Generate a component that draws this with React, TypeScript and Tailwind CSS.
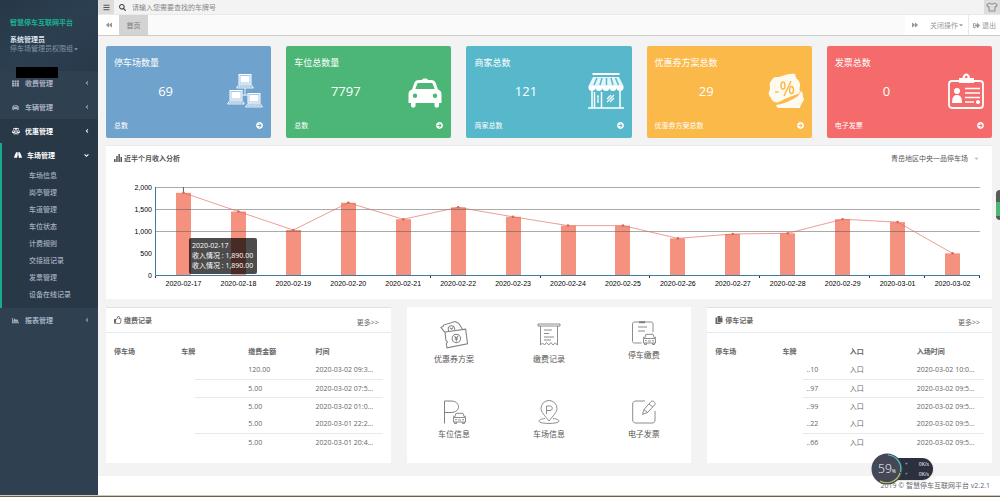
import React from 'react';
import {
  FaAngleDown,
  FaAngleLeft,
  FaArrowCircleRight,
  FaBackward,
  FaBalanceScale,
  FaBars,
  FaCar,
  FaCaretDown,
  FaChartArea,
  FaCopy,
  FaForward,
  FaRoad,
  FaSearch,
  FaSignOutAlt,
  FaRegThumbsUp,
  FaTh,
} from 'react-icons/fa';

const subItems = ['车场信息', '岗亭管理', '车道管理', '车位状态', '计费规则', '交接班记录', '发票管理', '设备在线记录'];

function MenuLink({ icon, label, bright, open }: { icon: React.ReactNode; label: string; bright?: boolean; open?: boolean }) {
  return (
    <a href="#" className={`flex h-6 items-center pr-2 pl-3 font-bold ${bright ? 'text-white' : 'text-[#a7b1c2]'}`}>
      <span className="flex w-[13px] shrink-0 items-center">{icon}</span>
      <span className="flex-1">{label}</span>
      {open ? <FaAngleDown className="size-[7px]" /> : <FaAngleLeft className="size-[6px]" />}
    </a>
  );
}

function Sidebar() {
  return (
    <aside className="relative w-[98px] shrink-0 bg-[#2f4050] text-[7px] leading-[9px]">
      <div className="h-[71px] bg-linear-to-br from-[#263848] via-[#2c3f50] to-[#28394a] pt-[18px] pl-[10px]">
        <h1 className="text-[7px] font-bold text-[#1ab394]">智慧停车互联网平台</h1>
        <p className="mt-2 font-bold text-[#dfe4ed]">系统管理员</p>
        <button type="button" className="flex items-center whitespace-nowrap text-[#8095a8]">
          停车场管理员权限组
          <FaCaretDown className="size-[6px]" />
        </button>
      </div>
      <div className="absolute top-[67px] left-4 h-[11px] w-[42px] bg-black" />
      <nav>
        <MenuLink icon={<FaTh className="size-[7px]" />} label="收费管理" />
        <MenuLink icon={<FaCar className="size-[7px]" />} label="车辆管理" />
        <div className="bg-[#293846]">
          <MenuLink icon={<FaBalanceScale className="size-[8px]" />} label="优惠管理" bright />
          <div className="border-l-2 border-[#19aa8d] pb-[5px]">
            <MenuLink icon={<FaRoad className="size-[8px]" />} label="车场管理" bright open />
            <ul>
              {subItems.map((s) => (
                <li key={s}>
                  <a href="#" className="flex h-[17px] items-center pl-[27px] font-medium text-[#a7b1c2]">
                    {s}
                  </a>
                </li>
              ))}
            </ul>
          </div>
        </div>
        <MenuLink icon={<FaChartArea className="size-[7px]" />} label="报表管理" />
      </nav>
    </aside>
  );
}

function ComputersIcon() {
  return (
    <svg viewBox="0 0 36 36" className="size-9" fill="none" stroke="#fff">
      <path d="M18 14v9M13 22h11" strokeWidth="1" opacity=".8" />
      {[
        [10, 1],
        [1, 17],
        [19, 20],
      ].map(([x, y]) => (
        <g key={x} transform={`translate(${x} ${y})`}>
          <rect x="2" y=".5" width="12" height="9.500" fill="#a9c8e4" strokeWidth="1" />
          <rect x="3.500" y="2" width="9" height="6.500" fill="#fff" stroke="none" />
          <path d="M1.500 11h13l2 3H-.5z" fill="#8fb8dc" strokeWidth=".8" />
          <path d="M2 12.500h12" stroke="#fff" strokeWidth=".7" strokeDasharray="1 .7" />
        </g>
      ))}
    </svg>
  );
}

function TaxiIcon() {
  return (
    <svg viewBox="0 0 36 36" className="size-9" fill="#fff">
      <path
        fillRule="evenodd"
        d="M15 7c0-2 6-2 6 0h3c2.500 0 4 1 4.700 3l2.300 6.500c2.500.8 3.500 2.500 3.500 5V30H32v2.500c0 3-4.500 3-4.500 0V30h-19v2.500c0 3-4.500 3-4.500 0V30H1.500v-8.500c0-2.500 1-4.200 3.500-5L7.300 10C8 8 9.500 7 12 7zM12 10c-1 0-1.600.4-2 1.500L8.300 16h19.400L26 11.500c-.4-1.100-1-1.500-2-1.500zM8 20.500a2.200 2.200 0 1 0 0 4.400 2.200 2.200 0 1 0 0-4.400zM28 20.500a2.200 2.200 0 1 0 0 4.400 2.200 2.200 0 1 0 0-4.400z"
      />
    </svg>
  );
}

function ShopIcon() {
  return (
    <svg viewBox="0 0 36 36" className="size-9" fill="none" stroke="#fff">
      <path d="M4.500 1h27" strokeWidth="2" />
      <path d="M5 4h26l4.500 9H.5z" fill="#e4f6fa" stroke="none" />
      <path d="M9 5l-3 7M14 5l-2 7M18.500 5v7M23 5l2 7M27.500 5l3 7" stroke="#57b8cb" strokeWidth="1.500" />
      <path d="M.5 13h35v2c0 4-7 4-7 0 0 4-7 4-7 0 0 4-7 4-7 0 0 4-7 4-7 0 0 4-7 4-7 0z" fill="#fff" stroke="none" />
      <path d="M4 18v17M32 18v17M13.500 19v16M0 35h36M6.500 19v16" strokeWidth="1.500" />
      <path d="M10 23v6M9 23h2M9 29h2M19 26l4-4M19 29l7-7M22 29l4-4" strokeWidth="1.200" />
    </svg>
  );
}

function CouponIcon() {
  return (
    <svg viewBox="0 0 36 36" className="size-9">
      <path
        d="M3 8c1-1 2-4 5-4 2 0 4 0 6-1 4-1 8-3 13-2 1 1 0 3 2 5s3 3 3 6-1 3 0 6c0 2-2 3-5 4-5 2-9 3-14 6-3 2-7 2-9-1-1-2-2-3-3-5-1-3 1-4 1-7 0-2-1-4 1-7z"
        fill="#fffaf0"
      />
      <path d="M8 32c8-1 16-5 22-9l3-5c3 3 1 5 3 8 0 2-3 4-4 9H10c-1-1-2-2-2-3z" fill="#fffaf0" />
      <g stroke="#fbb94a" strokeWidth="1.500" fill="none">
        <path d="M7 19h3.500M16 23L23 8" />
        <ellipse cx="15" cy="12.500" rx="2" ry="3.500" />
        <ellipse cx="23.500" cy="17" rx="2" ry="3.500" />
      </g>
    </svg>
  );
}

function BadgeIcon() {
  return (
    <svg viewBox="0 0 36 36" className="size-9" fill="none" stroke="#fff">
      <rect x="1" y="8" width="34" height="27" rx="3" strokeWidth="1.800" />
      <path d="M11 5h3.500c.5-6 7-6 7.500 0H26v5H11z" fill="#fff" stroke="none" />
      <circle cx="18.300" cy="4" r="1.300" fill="#f56b6b" stroke="none" />
      <circle cx="9" cy="18" r="3" fill="#fff" stroke="none" />
      <path d="M4 30c0-7 2.500-8 5-8s5 1 5 8z" fill="#fff" stroke="none" />
      <path d="M17 15.500h15M17 20h15M17 24.500h15M17 29h9M28 29h4" strokeWidth="1.500" />
      <circle cx="30" cy="29" r="2" fill="#fff" stroke="none" />
    </svg>
  );
}

const cards = [
  { title: '停车场数量', value: '69', note: '总数', bg: 'bg-[#6fa2cc]', icon: <ComputersIcon /> },
  { title: '车位总数量', value: '7797', note: '总数', bg: 'bg-[#4cb676]', icon: <TaxiIcon /> },
  { title: '商家总数', value: '121', note: '商家总数', bg: 'bg-[#57b8cb]', icon: <ShopIcon /> },
  { title: '优惠券方案总数', value: '29', note: '优惠券方案总数', bg: 'bg-[#fbb94a]', icon: <CouponIcon /> },
  { title: '发票总数', value: '0', note: '电子发票', bg: 'bg-[#f56b6b]', icon: <BadgeIcon /> },
];

function StatCards() {
  return (
    <section className="grid grid-cols-5 gap-[15px]">
      {cards.map((c) => (
        <article key={c.title} className={`flex h-[92px] flex-col rounded-[2px] pt-[10px] pr-2 pb-2 pl-2 text-white ${c.bg}`}>
          <h2 className="text-[9px] leading-[14px]">{c.title}</h2>
          <div className="flex flex-1 items-center pb-[6px]">
            <p className="flex-1 pr-[10px] text-center text-[13px] leading-4">{c.value}</p>
            {c.icon}
          </div>
          <a href="#" className="mt-1 flex items-center justify-between text-[7px] leading-[9px]">
            {c.note}
            <FaArrowCircleRight className="size-[7px]" />
          </a>
        </article>
      ))}
    </section>
  );
}

const incomes: [string, number][] = [
  ['2020-02-17', 1890],
  ['2020-02-18', 1465],
  ['2020-02-19', 1045],
  ['2020-02-20', 1665],
  ['2020-02-21', 1290],
  ['2020-02-22', 1560],
  ['2020-02-23', 1345],
  ['2020-02-24', 1145],
  ['2020-02-25', 1145],
  ['2020-02-26', 855],
  ['2020-02-27', 955],
  ['2020-02-28', 970],
  ['2020-02-29', 1290],
  ['2020-03-01', 1225],
  ['2020-03-02', 515],
];

const PLOT_LEFT = 50;
const PLOT_RIGHT = 874;
const BASE = 106;
const STEP = (PLOT_RIGHT - PLOT_LEFT) / incomes.length;
const px = (i: number) => PLOT_LEFT + STEP * (i + 0.5);
const py = (v: number) => BASE - (v * 88) / 2000;

function IncomeChart() {
  return (
    <div className="relative">
      <svg viewBox="0 0 886 129" className="block h-auto w-full" fontFamily='"Liberation Sans", Arial, sans-serif' fontSize="7">
        {incomes.map(([d, v], i) => (
          <rect key={d} x={Math.round(px(i) - 7.5)} y={py(v)} width="15" height={BASE - py(v)} fill="#f4917f" />
        ))}
        {[1000, 1500, 2000].map((v) => (
          <path key={v} d={`M${PLOT_LEFT} ${py(v) - 0.5}H${PLOT_RIGHT}`} stroke="#555" strokeOpacity=".5" />
        ))}
        <path d={`M${px(0)} 17V23`} stroke="#3f6f96" />
        <path d={`M49.500 17V105.500H${PLOT_RIGHT}`} fill="none" stroke="#3d7ba3" />
        {[0, 5, 7, 9, 11, 13, 14, 15].map((i) => (
          <path key={i} d={`M${Math.round(PLOT_LEFT + STEP * i) - 0.5} 106v2`} stroke="#333" />
        ))}
        <polyline
          points={incomes.map(([, v], i) => `${px(i)},${py(v)}`).join(' ')}
          fill="none"
          stroke="#e06a5c"
          strokeOpacity=".65"
        />
        {incomes.map(([d, v], i) => (
          <circle key={d} cx={px(i)} cy={py(v)} r="1.300" fill="#d9665a" />
        ))}
        {[0, 500, 1000, 1500, 2000].map((v) => (
          <text key={v} x="46" y={py(v) + 2} textAnchor="end" fill="#000">
            {v.toLocaleString('en-US')}
          </text>
        ))}
        {incomes.map(([d], i) => (
          <text key={d} x={px(i)} y="116" textAnchor="middle" fill="#000">
            {d}
          </text>
        ))}
      </svg>
      <div className="absolute top-[68px] left-[83px] rounded-[2px] bg-black/70 py-[3px] pr-1 pl-[3px] text-[7px] leading-[10px] whitespace-nowrap text-white">
        <p>2020-02-17</p>
        <p>收入情况 : 1,890.00</p>
        <p>收入情况 : 1,890.00</p>
      </div>
    </div>
  );
}

function BarsIcon() {
  return (
    <svg viewBox="0 0 8 8" className="size-2" fill="#555">
      <path d="M0 5h1.500v3H0zM2.200 2h1.500v6H2.200zM4.400 0h1.500v8H4.400zM6.500 3H8v5H6.500z" />
    </svg>
  );
}

function ChartPanel() {
  return (
    <section className="mt-2 bg-white shadow-[0_-1px_0_#e7eaec]">
      <header className="flex h-6 items-center justify-between px-2 text-[7px] leading-[9px] text-[#555]">
        <h2 className="flex items-center gap-[2px] font-bold">
          <BarsIcon />
          近半个月收入分析
        </h2>
        <label className="relative mr-1 flex items-center">
          <select aria-label="停车场" className="appearance-none bg-transparent pr-3 outline-none">
            <option>青岳地区中央一品停车场</option>
          </select>
          <FaCaretDown className="pointer-events-none absolute right-0 size-[7px] text-[#bbb]" />
        </label>
      </header>
      <IncomeChart />
    </section>
  );
}

function RecordTable({
  icon,
  title,
  heads,
  rows,
  mask,
}: {
  icon: React.ReactNode;
  title: string;
  heads: string[];
  rows: string[][];
  mask: string;
}) {
  return (
    <section className="mt-px bg-white text-[7px] leading-[9px] text-[#666] shadow-[0_-1px_0_#e0e2e4]">
      <header className="flex h-[25px] items-center justify-between border-b border-[#e7eaec] pr-3 pl-2">
        <h2 className="flex items-center gap-[2px] font-bold">
          {icon}
          {title}
        </h2>
        <a href="#" className="pt-1">
          更多&gt;&gt;
        </a>
      </header>
      <div className="relative px-2 pt-2 pb-3">
        <table className="w-full table-fixed border-collapse text-left">
          <thead>
            <tr className="h-5">
              {heads.map((h) => (
                <th key={h} className="font-bold">
                  {h}
                </th>
              ))}
            </tr>
          </thead>
          <tbody>
            {rows.map((r, i) => (
              <tr key={i} className={`h-[18px] ${i === 2 || i === 4 ? '' : 'border-b border-[#e7eaec]'}`}>
                {r.map((c, j) => (
                  <td key={j} className={`whitespace-nowrap ${j === 1 ? 'pl-6' : ''}`}>
                    {c}
                  </td>
                ))}
              </tr>
            ))}
          </tbody>
        </table>
        <div className={`absolute top-7 bottom-2 left-0 bg-white ${mask}`} />
      </div>
    </section>
  );
}

function LineIcon({ size, children }: { size: string; children: React.ReactNode }) {
  return (
    <svg viewBox="0 0 24 24" className={size} fill="none" stroke="#808080" strokeWidth=".9">
      {children}
    </svg>
  );
}

const miniCar = (
  <g transform="translate(11 12.500)">
    <path d="M1.500 5l1.500-4.200h7L11.500 5M.5 5h12v4.500H.5zM1.500 9.500V11h2V9.500M9.500 9.500V11h2V9.500" fill="#fff" />
    <path d="M2 7.200h2M9 7.200h2M5 7.500h3M0 3.500l1.500 1M13 3.500l-1.500 1" />
  </g>
);

const shortcuts = [
  {
    label: '优惠券方案',
    icon: (
      <LineIcon size="size-7">
        <path d="M4 9.500L.8 5.500l2-1L3 3.500 13 .5l3 1.500 3.500 5.500" />
        <path d="M4.300 9.500L22 7l1.600 12.500L6 23l-.6-3.500 1-1.500-1.300-1.500z" />
        <circle cx="14" cy="15" r="3.600" />
        <path d="M12.500 13l1.500 2 1.500-2.300M14 15v2.500M12.500 15.500h3" />
        <path d="M7.500 8.500a2.800 2.800 0 1 1 5-.8M8.800 6l1.200 1 1-1.500" />
      </LineIcon>
    ),
  },
  {
    label: '缴费记录',
    icon: (
      <LineIcon size="size-7 p-[2px]">
        <path d="M1 1h22v2H1zM3.500 3v19l2-2 2 2 2-2.500 2.300 2.500 2.200-2.500 2 2.500 2.200-2 2.300 2V3" />
        <path d="M7 7h8M7 10.500h5M7 14h10M7 17h7" />
      </LineIcon>
    ),
  },
  {
    label: '停车缴费',
    icon: (
      <LineIcon size="size-6">
        <path d="M9.500 22H2.500C1 22 .5 21 .5 20V3c0-1.500 1-2 2-2H19c1.500 0 2 1 2 2v8" />
        <path d="M7 1.200h6" strokeWidth="2" />
        <path d="M6 6h9M6 10h7" />
        {miniCar}
      </LineIcon>
    ),
  },
  {
    label: '车位信息',
    icon: (
      <LineIcon size="size-6">
        <path d="M2.500 23.500V1H9c10 0 10 11.500 0 11.500H2.500" strokeWidth="1" />
        {miniCar}
      </LineIcon>
    ),
  },
  {
    label: '车场信息',
    icon: (
      <LineIcon size="size-6">
        <path d="M12 21C8 16 4 12 4 8.500a8 8 0 0 1 16 0C20 12 16 16 12 21z" />
        <path d="M9.500 14V6H13c3 0 3 4.500 0 4.500H9.500" />
        <path d="M8 18.500c-4 .5-6 1.500-6 2.700 0 3 20 3 20 0 0-1.200-2-2.200-6-2.700" />
      </LineIcon>
    ),
  },
  {
    label: '电子发票',
    icon: (
      <LineIcon size="size-6">
        <path d="M13 1H4C2 1 .7 2 .7 4v16c0 2 1.300 3 3.300 3h16c2 0 3-1 3-3v-9" />
        <path d="M10.500 14.500l1.500-5L19 1.500c1.500-1.500 5 1.200 4 3l-7.500 8zM12 9.500l3.500 3M17 4l4 3" />
      </LineIcon>
    ),
  },
];

function Shortcuts() {
  return (
    <section className="grid grid-cols-3 grid-rows-[79px_77px] bg-white">
      {shortcuts.map((s) => (
        <a
          key={s.label}
          href="#"
          className="flex flex-col items-center gap-1 pt-[14px] text-[8px] leading-3 text-[#555]"
        >
          {s.icon}
          {s.label}
        </a>
      ))}
    </section>
  );
}

function TopBars() {
  return (
    <header className="text-[7px] leading-[9px] text-[#999]">
      <div className="flex h-[14px] items-stretch bg-[#f3f3f4]">
        <button type="button" aria-label="菜单" className="flex w-4 items-center justify-center bg-[#ddd] text-[#555]">
          <FaBars className="size-[7px]" />
        </button>
        <label className="flex flex-1 items-center gap-[6px] pl-[5px]">
          <FaSearch className="size-[7px] text-[#444]" />
          <input
            type="text"
            aria-label="搜索"
            placeholder="请输入您需要查找的车牌号"
            className="flex-1 bg-transparent outline-none placeholder:text-[#888]"
          />
        </label>
        <button type="button" aria-label="主题" className="flex w-4 items-center justify-center bg-[#ddd]">
          <svg viewBox="0 0 12 10" className="h-[10px] w-3" fill="none" stroke="#777" strokeWidth=".8">
            <path d="M4 1L.8 2.500l1 2.500L3 4.500V9h6V4.500l1.200.5 1-2.500L8 1c-.5 1.500-3.500 1.500-4 0z" />
          </svg>
        </button>
      </div>
      <div className="flex h-[22px] items-stretch border-t border-b border-t-[#e7eaec] border-b-[#ccc] bg-[#fafafa]">
        <button type="button" aria-label="向左" className="flex w-[21px] items-center justify-center bg-white">
          <FaBackward className="size-[6px]" />
        </button>
        <button type="button" className="w-[29px] bg-[#d3d3d3] text-[#777]">
          首页
        </button>
        <div className="flex-1" />
        <button type="button" aria-label="向右" className="flex w-[20px] items-center justify-center bg-white">
          <FaForward className="size-[6px]" />
        </button>
        <button type="button" className="flex w-[43px] items-center justify-end bg-white pr-1">
          关闭操作
          <FaCaretDown className="size-[6px]" />
        </button>
        <a href="#" className="flex w-8 items-center justify-center gap-[2px] border-l border-[#e7eaec] bg-white">
          <FaSignOutAlt className="size-[7px]" />
          退出
        </a>
      </div>
    </header>
  );
}

function SpeedWidget() {
  return (
    <div className="absolute right-[67px] bottom-3 flex h-8 w-[62px] items-center text-white">
      <div className="absolute right-0 flex h-[22px] w-[46px] flex-col justify-center rounded-full bg-[#2c2f3e] pr-1 pl-[18px] text-[5px] leading-[10px] shadow-sm">
        <p className="flex justify-between">
          <span className="text-[#5cc8f0]">+</span>0K/s
        </p>
        <p className="flex justify-between">
          <span className="text-[#4ecb71]">+</span>0K/s
        </p>
      </div>
      <div className="relative flex size-8 items-center justify-center">
        <svg viewBox="0 0 32 32" className="absolute inset-0" fill="none">
          <circle cx="16" cy="16" r="15.500" fill="#434758" />
          <path d="M17 2a14 14 0 0 1 12.500 17" stroke="#4fc3b8" strokeWidth="1.200" />
          <path d="M29 20A14 14 0 0 1 9 28" stroke="#b9c95a" strokeWidth="1.200" />
        </svg>
        <span className="relative text-[12px] leading-3 font-light">59</span>
        <span className="relative pt-1 text-[5px] leading-[6px]">%</span>
      </div>
    </div>
  );
}

export default function App() {
  return (
    <div className="relative flex min-h-screen flex-col bg-white font-['Open_Sans','Noto_Sans_CJK_SC',sans-serif]">
      <div className="flex flex-1">
        <Sidebar />
        <div className="flex min-w-0 flex-1 flex-col">
          <TopBars />
          <main className="flex-1 bg-[#f3f3f4] px-2 pt-[10px] pb-[13px]">
            <StatCards />
            <ChartPanel />
            <div className="mt-2 grid grid-cols-3 gap-4">
              <RecordTable
                icon={<FaRegThumbsUp className="size-2" />}
                title="缴费记录"
                heads={['停车场', '车牌', '缴费金额', '时间']}
                rows={[
                  ['', '', '120.00', '2020-03-02 09:3...'],
                  ['', '', '5.00', '2020-03-02 07:5...'],
                  ['', '', '5.00', '2020-03-02 01:0...'],
                  ['', '', '5.00', '2020-03-01 22:2...'],
                  ['', '', '5.00', '2020-03-01 20:4...'],
                ]}
                mask="w-[89px]"
              />
              <Shortcuts />
              <RecordTable
                icon={<FaCopy className="size-2" />}
                title="停车记录"
                heads={['停车场', '车牌', '入口', '入场时间']}
                rows={[
                  ['', '..10', '入口', '2020-03-02 10:0...'],
                  ['', '..97', '入口', '2020-03-02 09:5...'],
                  ['', '..99', '入口', '2020-03-02 09:5...'],
                  ['', '..22', '入口', '2020-03-02 09:5...'],
                  ['', '..66', '入口', '2020-03-02 09:5...'],
                ]}
                mask="w-24"
              />
            </div>
          </main>
          <footer className="flex h-[19px] items-center justify-end bg-white pr-[10px] text-[7px] leading-[9px] text-[#666]">
            2019 © 智慧停车互联网平台 v2.2.1
          </footer>
        </div>
      </div>
      <div className="h-[2px] border-t border-[#cfc8b8] bg-[#6b6147]" />
      <div className="absolute top-[190px] right-0 flex h-[30px] w-1 flex-col overflow-hidden rounded-l-sm bg-[#5a5a5a] pt-3 pb-1">
        <div className="flex-1 bg-[#4fb573]" />
      </div>
      <SpeedWidget />
    </div>
  );
}
